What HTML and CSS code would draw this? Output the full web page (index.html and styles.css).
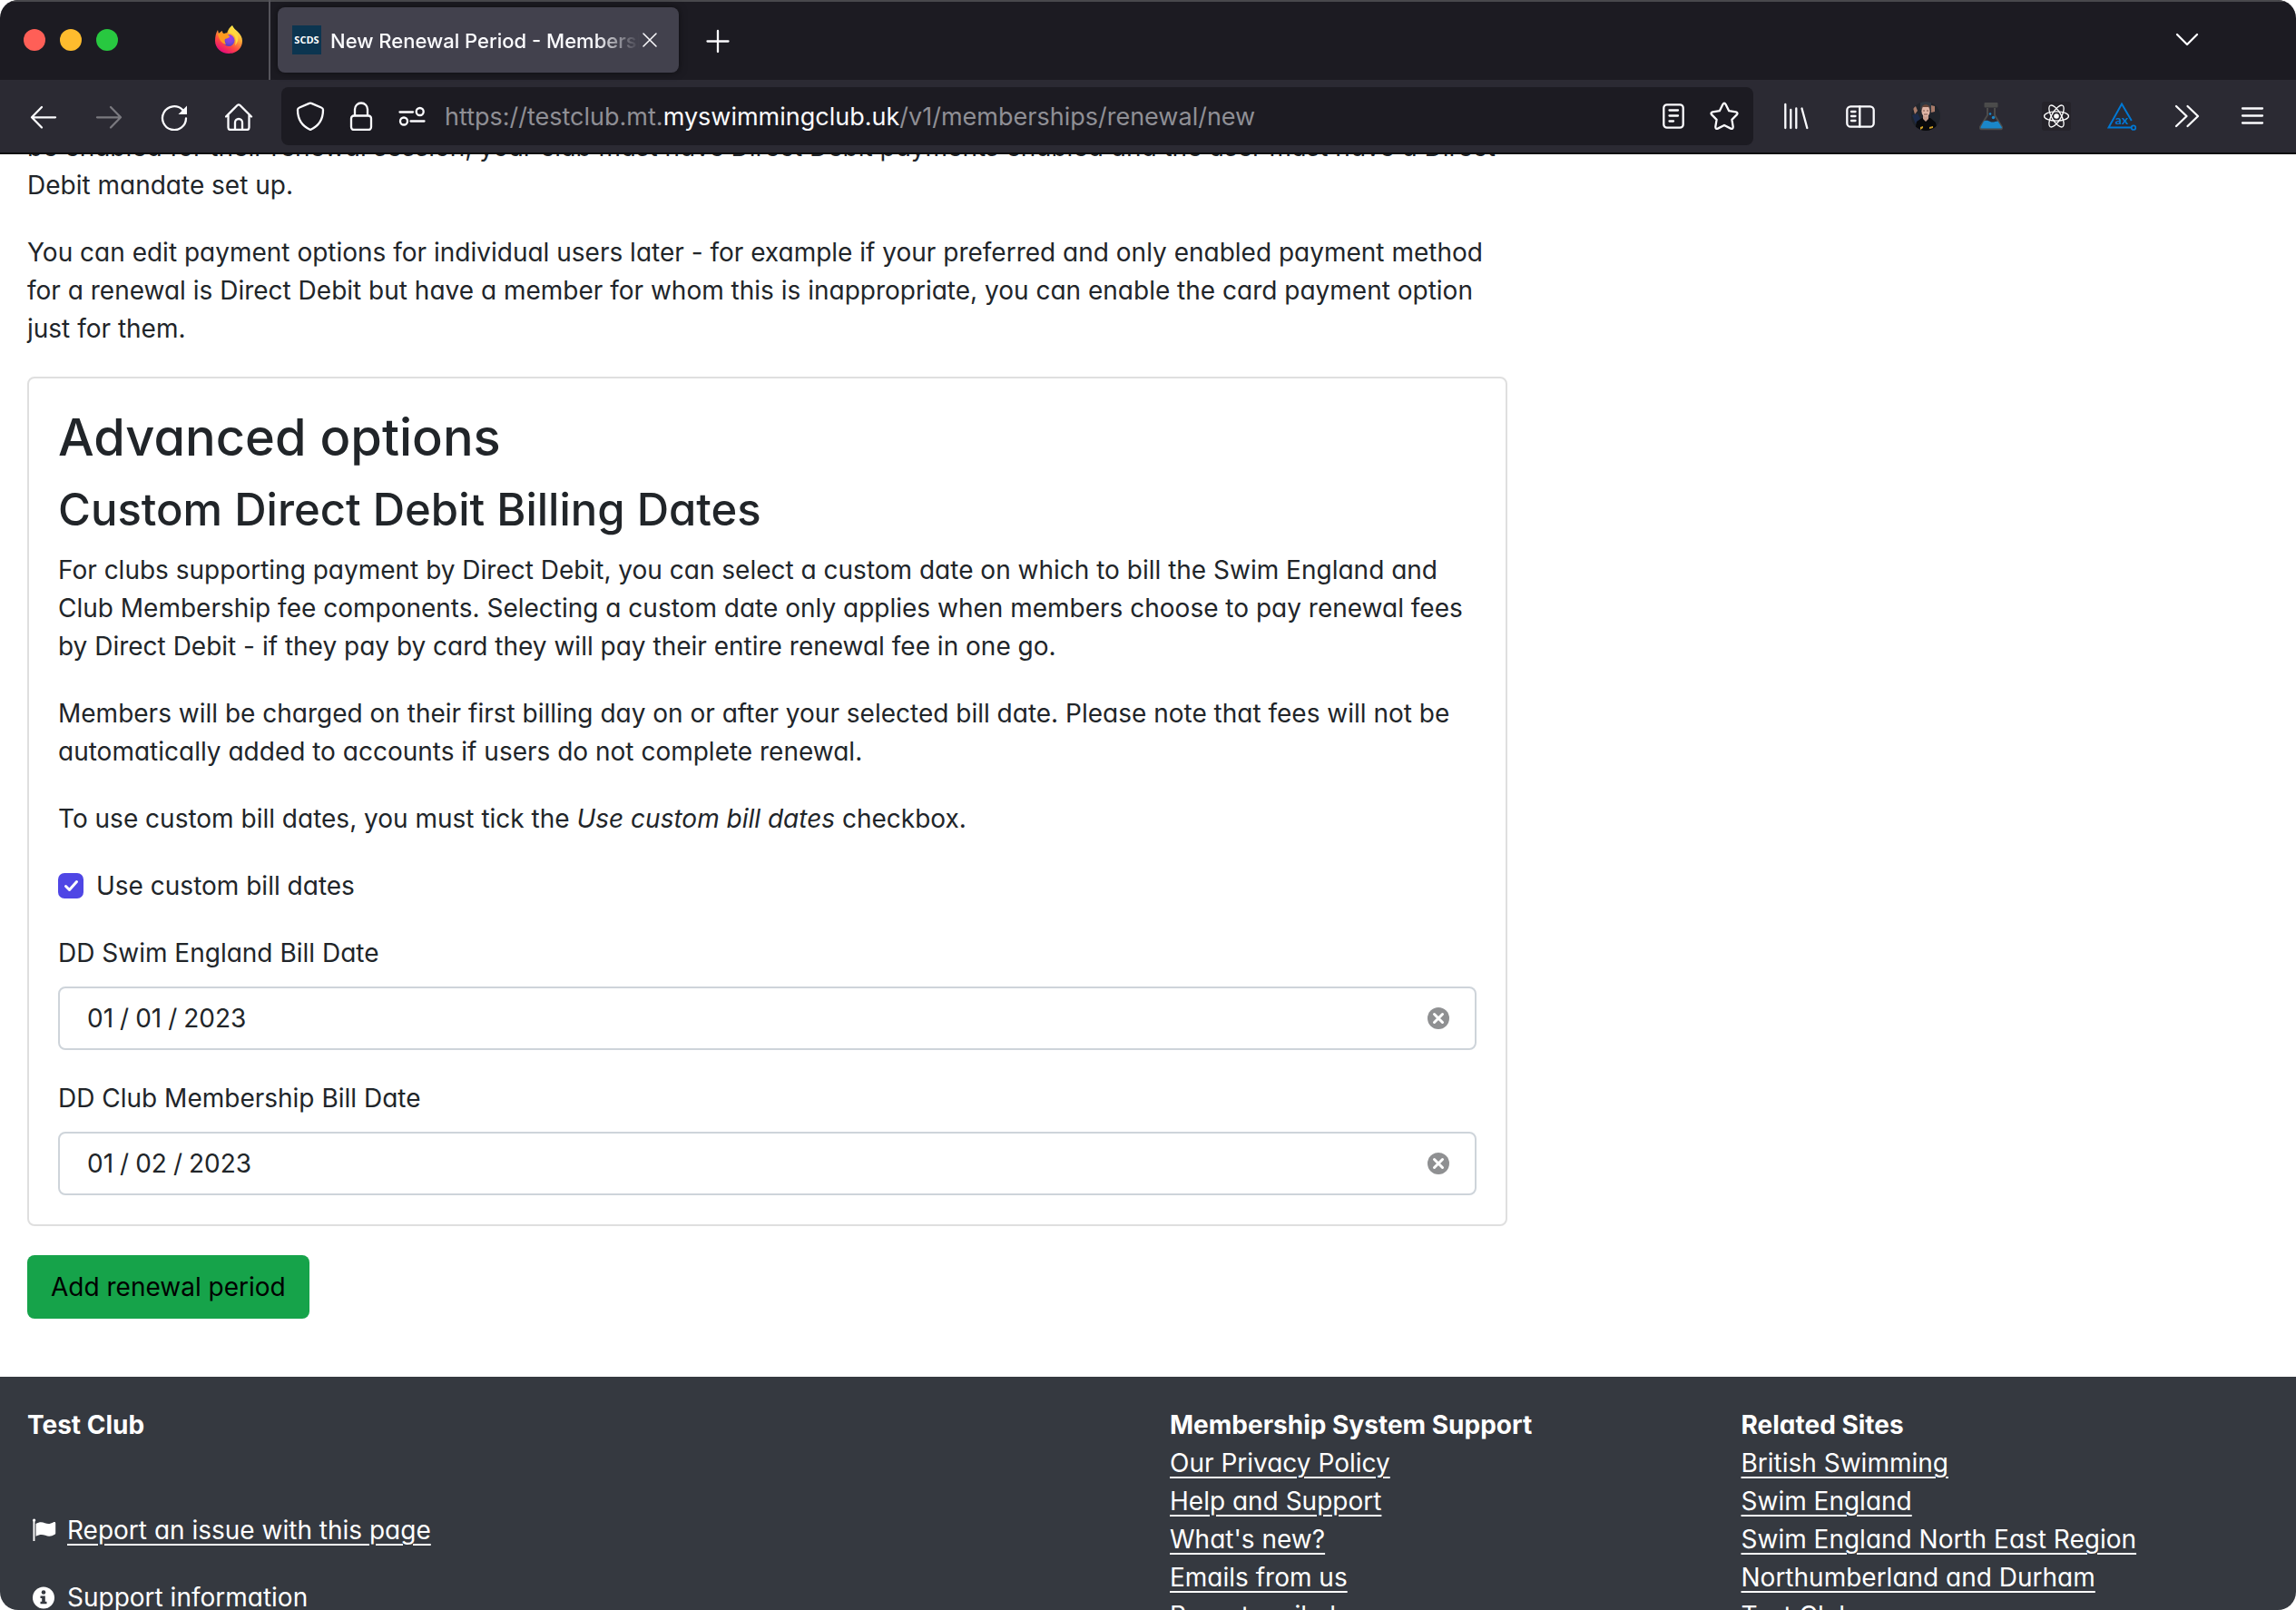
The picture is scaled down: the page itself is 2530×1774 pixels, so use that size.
FILE: index.html
```html
<!DOCTYPE html>
<html lang="en-GB">
<head>
<meta charset="utf-8">
<title>New Renewal Period - Membership</title>
<link rel="stylesheet" href="styles.css">
</head>
<body>
<div class="window">
  <header class="chrome">
    <div class="tabs">
      <div class="lights">
        <button class="light light-close" aria-label="Close window"></button>
        <button class="light light-min" aria-label="Minimise window"></button>
        <button class="light light-max" aria-label="Zoom window"></button>
      </div>
      <button class="firefox-view" aria-label="Firefox View">
        <svg class="icon" viewBox="0 0 32 32">
          <defs>
            <linearGradient id="fire" x1="0.8" y1="0.1" x2="0.3" y2="1"><stop offset="0" stop-color="#fff44f"/><stop offset="0.35" stop-color="#ffa436"/><stop offset="0.65" stop-color="#ff4a41"/><stop offset="1" stop-color="#e3067e"/></linearGradient>
            <radialGradient id="globe" cx="0.6" cy="0.3" r="0.8"><stop offset="0" stop-color="#a537e8"/><stop offset="0.5" stop-color="#7a46dc"/><stop offset="1" stop-color="#4b3fb5"/></radialGradient>
          </defs>
          <path fill="url(#fire)" d="M20 0c1 3 4 5 6 7 3 3 5 6 5 10 0 9-7 14-15 14S1 25 1 17C1 12 2 8 4 5l1 4c1-1 2-2 4-3 0 1 0 2 1 3h4c1-4 3-7 6-9z"/>
          <circle cx="16" cy="16.500" r="6.500" fill="url(#globe)"/>
          <path fill="#ff9a1f" d="M4 9c3-1 5-1 7 0 2-1 3-1 5 0-1 1-1 2 0 2l1 1c0 2-3 2-5 3-1 2 0 4 1 6-5-1-8-6-9-12z"/>
          <path fill="#ffd83d" d="M20 1c0 3 4 6 6 10 1 4 0 8-3 11 1-3 1-8-1-11-2-2-5-3-6-2 0-3 2-6 4-8z"/>
        </svg>
      </button>
      <div class="tab">
        <svg class="icon" viewBox="0 0 32 32"><rect width="32" height="32" fill="#0c3550"/><text class="favicon-text" x="16" y="20" text-anchor="middle">SCDS</text></svg>
        <span class="tab-title">New Renewal Period - Membership</span>
        <button class="tab-close" aria-label="Close tab"><svg viewBox="0 0 16 16" class="small line thin"><path d="M1 1l14 14M15 1L1 15"/></svg></button>
      </div>
      <button class="tool new-tab" aria-label="New tab"><svg class="icon line" viewBox="0 0 32 32"><path d="M16 6v23M4.500 17.500h23"/></svg></button>
      <button class="tool list-tabs" aria-label="List all tabs"><svg class="icon line" viewBox="0 0 32 32"><path d="M5 10l11 11 11-11"/></svg></button>
    </div>
    <nav class="toolbar">
      <button class="tool" aria-label="Back"><svg class="icon line" viewBox="0 0 32 32"><path d="M29 17.300H3M14 6L3 17.300 14 28.500"/></svg></button>
      <button class="tool dim" aria-label="Forward"><svg class="icon line" viewBox="0 0 32 32"><path d="M3 17.300h26M18 6l11 11.300L18 28.500"/></svg></button>
      <button class="tool" aria-label="Reload"><svg class="icon line" viewBox="0 0 32 32"><path d="M25 8.800A13 13 0 1 0 29 18.500"/><path class="fill" d="M30 4.500V14h-9.500z"/></svg></button>
      <button class="tool" aria-label="Home"><svg class="icon line" viewBox="1 0 32 32"><path d="M2 16.500L14.500 4q1.500-1.300 3 0L30 16.500M4.500 14.500v14Q4.500 31 7 31h18q2.500 0 2.500-2.500v-14M12 31v-8a4 4 0 0 1 8 0v8"/></svg></button>
      <div class="urlbar">
        <button class="bar-tool" aria-label="Tracking protection"><svg class="icon line" viewBox="0 0 32 32"><path d="M14.800 1.900q1.200-.6 2.400 0L28 6.500q2 .8 2 2.500C30 20 25 27 16 31 7 27 2 20 2 9q0-1.700 2-2.500z"/></svg></button>
        <button class="bar-tool" aria-label="Connection secure"><svg class="icon line" viewBox="0 0 32 32"><rect x="5" y="15.500" width="22" height="15.500" rx="3"/><path d="M9 15V8.500a7 7 0 0 1 14 0V15"/></svg></button>
        <button class="bar-tool" aria-label="Permissions"><svg class="icon line" viewBox="0 0 32 32"><path d="M2.500 11.500H17M14.500 21.500h15"/><circle cx="24.700" cy="11" r="4"/><circle cx="7" cy="21.500" r="4"/></svg></button>
        <div class="url">https://testclub.mt.<span class="host">myswimmingclub.uk</span>/v1/memberships/renewal/new</div>
        <button class="bar-tool" aria-label="Reader view"><svg class="icon line" viewBox="0 0 32 32"><rect x="5.300" y="3.300" width="21.400" height="25.400" rx="3.500"/><path d="M11.500 9.500h9.500M11.500 15.500h9.500M11.500 21.500H16"/></svg></button>
        <button class="bar-tool" aria-label="Bookmark this page"><svg class="icon line" viewBox="0 0 32 32"><path d="M14.400 3q1.600-2.500 3.200 0l3.600 7.200 7.600 1.200q2.800.8 1 3l-5.400 5.500 1.300 7.700q.1 2.900-2.600 2L16 26l-7.100 3.600q-2.700.9-2.600-2l1.300-7.700-5.400-5.500q-1.800-2.200 1-3l7.600-1.200z"/></svg></button>
      </div>
      <button class="tool" aria-label="Library"><svg class="icon line" viewBox="-1 0 32 32"><path d="M4.300 3v26M10.300 9v20M16.300 7.500V29M22.500 7.500L28.300 29"/></svg></button>
      <button class="tool" aria-label="Sidebars"><svg class="icon line" viewBox="0 0 32 32"><rect x="1.300" y="5.300" width="29.400" height="22.400" rx="4"/><path d="M15.300 5.300v22.400M6 11h4.500M6 16h4.500M6 21h4.500"/></svg></button>
      <button class="tool" aria-label="Profile">
        <svg class="icon" viewBox="0 0 32 32">
          <clipPath id="round"><circle cx="16" cy="16" r="16"/></clipPath>
          <g clip-path="url(#round)"><rect width="32" height="32" fill="#20242b"/><path fill="#303841" d="M10 0h12v9H10z"/><path fill="#a77a69" d="M2 7l3-2 2 5-3 4zM22 4l4 1v6l-4 1z"/><path fill="#1d2b4a" d="M1 15l6-2 3 6-5 6z"/><path fill="#08090c" d="M4 32l2-10 6-4h9l6 5 2 9z"/><path fill="#c89d8d" d="M13 14h6v5l-3 3-3-3z"/><ellipse cx="16" cy="10.500" rx="4.600" ry="6" fill="#dfb5a5"/><path fill="#674638" d="M11 10c-1-9 11-9 10 0l-1-4h-8z"/><path stroke="#795348" d="M13 10h2M17 10h2M14 14h4"/><path fill="#cf9e22" d="M10 28l3-1v2l-3 2zM20 28l4-1v2l-4 1z"/></g>
        </svg>
      </button>
      <button class="tool" aria-label="Experiments"><svg class="icon" viewBox="0 0 32 32"><path fill="none" stroke="#4b4b4b" stroke-width="2" d="M12 7v8L4 28q-.5 2.300 2 2.300h20q2.500 0 2-2.300L20 15V7"/><rect x="8.500" y="1" width="15" height="5.500" rx="1" fill="#4b4b4b"/><path fill="#1b87c9" d="M8 21.500c3-1.500 5-.5 7 .5 3 1.500 6-.5 8.500-.5L28 28.500q0 1-1.500 1h-21q-1.500 0-1-1.500z"/><circle cx="15" cy="13.500" r="1.300" fill="#1b87c9"/><circle cx="18.500" cy="17.500" r="1.700" fill="#1b87c9"/></svg></button>
      <button class="tool" aria-label="React tools"><svg class="icon" viewBox="0 0 32 32"><rect width="32" height="32" rx="3" fill="#25232a"/><g fill="none" stroke="#fff" stroke-width="1.300"><ellipse cx="16" cy="16" rx="13.500" ry="5.200"/><ellipse cx="16" cy="16" rx="13.500" ry="5.200" transform="rotate(60 16 16)"/><ellipse cx="16" cy="16" rx="13.500" ry="5.200" transform="rotate(120 16 16)"/></g><circle cx="16" cy="16" r="2.800" fill="#fff"/></svg></button>
      <button class="tool" aria-label="Accessibility tools"><svg class="icon" viewBox="0 0 32 32"><path fill="none" stroke="#0078d4" stroke-width="2" d="M26.800 21L16 2.500 1.500 28.500h25"/><circle cx="29" cy="28.700" r="2.300" fill="none" stroke="#0078d4" stroke-width="1.700"/><text class="ax-text" x="16" y="25" text-anchor="middle">ax</text></svg></button>
      <button class="tool" aria-label="More tools"><svg class="icon line" viewBox="0 0 32 32"><path d="M4 5l11.500 11L4 27M16.500 5L28 16 16.500 27"/></svg></button>
      <button class="tool" aria-label="Open menu"><svg class="icon line" viewBox="0 0 32 32"><path d="M5 7.500h22M5 15.500h22M5 23.500h22"/></svg></button>
    </nav>
  </header>

  <div class="viewport">
    <div class="page">
      <main class="container layout">
        <form class="form" onsubmit="return false">
          <p>be enabled for their renewal session, your club must have Direct Debit payments enabled and the user must have a Direct Debit mandate set up.</p>
          <p>You can edit payment options for individual users later - for example if your preferred and only enabled payment method for a renewal is Direct Debit but have a member for whom this is inappropriate, you can enable the card payment option just for them.</p>
          <section class="card">
            <h2>Advanced options</h2>
            <h3>Custom Direct Debit Billing Dates</h3>
            <p>For clubs supporting payment by Direct Debit, you can select a custom date on which to bill the Swim England and Club Membership fee components. Selecting a custom date only applies when members choose to pay renewal fees by Direct Debit - if they pay by card they will pay their entire renewal fee in one go.</p>
            <p>Members will be charged on their first billing day on or after your selected bill date. Please note that fees will not be automatically added to accounts if users do not complete renewal.</p>
            <p>To use custom bill dates, you must tick the <em>Use custom bill dates</em> checkbox.</p>
            <div class="check">
              <input type="checkbox" id="use-custom" checked>
              <label for="use-custom">Use custom bill dates</label>
            </div>
            <div class="field">
              <label for="se-date">DD Swim England Bill Date</label>
              <div class="control">
                <input type="text" id="se-date" value="01&#8197;/&#8197;01&#8197;/&#8197;2023">
                <button type="button" class="clear" aria-label="Clear Swim England date"><svg viewBox="0 0 24 24"><circle cx="12" cy="12" r="12"/><path d="M7.500 7.500l9 9M16.500 7.500l-9 9"/></svg></button>
              </div>
            </div>
            <div class="field">
              <label for="club-date">DD Club Membership Bill Date</label>
              <div class="control">
                <input type="text" id="club-date" value="01&#8197;/&#8197;02&#8197;/&#8197;2023">
                <button type="button" class="clear" aria-label="Clear club membership date"><svg viewBox="0 0 24 24"><circle cx="12" cy="12" r="12"/><path d="M7.500 7.500l9 9M16.500 7.500l-9 9"/></svg></button>
              </div>
            </div>
          </section>
          <button type="submit" class="submit">Add renewal period</button>
        </form>
      </main>
      <footer class="footer">
        <div class="container footer-grid">
          <section class="club">
            <strong>Test Club</strong>
            <div class="club-links">
              <div class="icon-link"><svg class="fw" viewBox="0 0 35 28"><path fill="#fff" d="M6 3.200a1.600 1.600 0 1 1 2.400 1.400V26H6.500V4.600Q6 4 6 3.200zM9.500 7c4-2.500 7-2 10-.8 3.500 1.400 6 .9 9.500-1 1.200-.6 2.200 0 2.200 1V17.500q0 .8-.8 1.300c-3.600 2.200-6.900 2.400-10.400 1-3.500-1.300-6.500-1.200-10.500.9z"/></svg><a href="#report">Report an issue with this page</a></div>
              <div class="icon-link"><svg class="fw" viewBox="0 0 35 28"><circle cx="18" cy="14.500" r="12" fill="#fff"/><circle cx="18" cy="8.500" r="2.300" fill="#353940"/><path fill="#353940" d="M14.500 12.500h5.300v6.300h1.700v2.400h-7v-2.400h1.700v-3.900h-1.700z"/></svg><a href="#support">Support information</a></div>
            </div>
          </section>
          <section class="links">
            <strong>Membership System Support</strong>
            <a href="#privacy">Our Privacy Policy</a>
            <a href="#help">Help and Support</a>
            <a href="#new">What's new?</a>
            <a href="#emails">Emails from us</a>
            <a href="#abuse">Report mail abuse</a>
          </section>
          <section class="links">
            <strong>Related Sites</strong>
            <a href="#bs">British Swimming</a>
            <a href="#se">Swim England</a>
            <a href="#sene">Swim England North East Region</a>
            <a href="#nd">Northumberland and Durham</a>
            <a href="#club">Test Club</a>
          </section>
        </div>
      </footer>
    </div>
  </div>
</div>
</body>
</html>
```

FILE: styles.css
```css
* { box-sizing: border-box; }
body { margin: 0; background: #fff; font-family: Inter, "Liberation Sans", sans-serif; font-size: 28px; line-height: 42px; color: #212529; }
button, input { font: inherit; color: inherit; }
button { border: 0; padding: 0; background: none; }
svg { display: block; }

.window { display: flex; flex-direction: column; height: 100vh; overflow: hidden; border-radius: 20px; }

/* Browser chrome */
.chrome { flex: none; color: #fbfbfe; border-bottom: 2px solid #0c0c0d; }
.tabs { display: flex; align-items: center; height: 88px; padding-right: 84px; background: #1c1b22; box-shadow: inset 0 2px #48484c; }
.lights { display: flex; gap: 16px; padding-left: 26px; }
.light { width: 24px; height: 24px; border-radius: 50%; }
.light-close { background: #ff5f57; }
.light-min { background: #febc2e; }
.light-max { background: #28c840; }
.firefox-view { display: flex; align-items: center; justify-content: flex-end; width: 168px; height: 88px; padding-right: 28px; border-right: 2px solid #55545b; }
.icon { width: 32px; height: 32px; flex: none; }
.tab { display: flex; align-items: center; width: 442px; height: 72px; margin-left: 8px; padding: 0 20px 0 16px; background: #42414d; border-radius: 8px; box-shadow: 0 0 8px rgba(0, 0, 0, .5); }
.favicon-text { font: 700 11px "Open Sans", sans-serif; fill: #fff; }
.tab-title { flex: 1; min-width: 0; margin-left: 10px; padding-top: 2px; overflow: hidden; white-space: nowrap; font-size: 22px; line-height: 32px; font-weight: 500; mask-image: linear-gradient(to right, #000 calc(100% - 48px), transparent); }
.tab-close { display: flex; align-items: center; justify-content: center; width: 24px; height: 32px; }
.small { width: 16px; height: 16px; }
.line { fill: none; stroke: currentColor; stroke-width: 2.300; stroke-linecap: round; stroke-linejoin: round; }
.thin { stroke-width: 1.500; }
.line .fill { fill: currentColor; stroke: none; }
.tool { display: flex; align-items: center; justify-content: center; width: 72px; height: 64px; flex: none; }
.new-tab { margin-left: 7px; }
.list-tabs { margin-left: auto; }
.dim { color: #7a797f; }
.toolbar { display: flex; align-items: center; height: 80px; padding: 0 12px; background: #2b2a33; }
.urlbar { flex: 1; min-width: 0; display: flex; align-items: center; height: 64px; margin: 0 10px; padding: 0 4px; background: #1c1b22; border-radius: 8px; }
.bar-tool { display: flex; align-items: center; justify-content: center; width: 56px; height: 56px; flex: none; }
.url { flex: 1; min-width: 0; padding: 2px 0 0 8px; overflow: hidden; white-space: nowrap; font-size: 27px; color: #8f8f95; }
.host { color: #fbfbfe; }
.ax-text { font: 700 14px Lato, sans-serif; fill: #0078d4; }

/* Page, scrolled part way down */
.viewport { flex: 1; min-height: 0; overflow: hidden; }
.page { margin-top: -29px; font-feature-settings: "cv11"; }
.container { padding: 0 30px; }
.layout { display: grid; grid-template-columns: repeat(3, 1fr); column-gap: 48px; padding-bottom: 64px; }
.form { grid-column: span 2; }
p { margin: 0 0 32px; }
.card { padding: 32px; margin-bottom: 32px; border: 2px solid #dfdfdf; border-radius: 8px; }
h2, h3 { margin: 0 0 16px; font-weight: 500; }
h2 { font-size: 56px; line-height: 67px; }
h3 { font-size: 49px; line-height: 59px; }
.check { display: flex; align-items: center; gap: 14px; margin-bottom: 32px; }
.check input { appearance: none; width: 28px; height: 28px; margin: 0; border-radius: 7px; background: #4f46e5 url("data:image/svg+xml,%3Csvg xmlns='http://www.w3.org/2000/svg' viewBox='0 0 28 28'%3E%3Cpath d='M8.500 14.500l4 4 8-9' fill='none' stroke='white' stroke-width='3' stroke-linecap='round' stroke-linejoin='round'/%3E%3C/svg%3E"); }
.field { margin-bottom: 32px; }
.field:last-child { margin-bottom: 0; }
.field label { display: block; margin-bottom: 16px; }
.control { display: flex; align-items: center; height: 70px; padding: 0 28px 0 30px; border: 2px solid #ced4da; border-radius: 8px; }
.control input { flex: 1; min-width: 0; padding: 0; border: 0; outline: 0; background: none; }
.clear svg { width: 24px; height: 24px; fill: #8f9092; }
.clear path { stroke: #fff; stroke-width: 3; stroke-linecap: round; }
.submit { display: block; height: 70px; padding: 0 26px; border-radius: 8px; background: #16a34a; color: #000; font-feature-settings: normal; }

.footer { padding: 32px 0; background: #353940; color: #fff; }
.footer-grid { display: grid; grid-template-columns: repeat(4, 1fr); column-gap: 48px; }
.club { grid-column: span 2; }
.club-links { display: grid; gap: 32px; margin-top: 74px; }
.icon-link { display: flex; align-items: center; gap: 9px; }
.fw { width: 35px; height: 28px; }
.footer a { color: #fff; text-decoration-thickness: 2px; text-underline-offset: 5px; }
.links { display: flex; flex-direction: column; align-items: flex-start; }
```
